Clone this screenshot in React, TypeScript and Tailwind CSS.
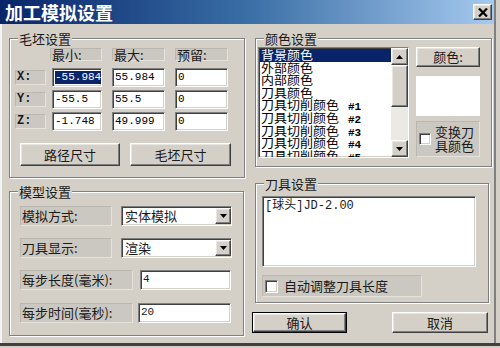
import React from "react";

const raised =
  "border border-t-white border-l-white border-r-[#404040] border-b-[#404040] shadow-[inset_-1px_-1px_0_#808080,inset_1px_1px_0_#e8e6e0]";
const sunken =
  "border border-t-[#808080] border-l-[#808080] border-r-white border-b-white shadow-[inset_1px_1px_0_#404040,inset_-1px_-1px_0_#d4d0c8]";
const etched = "border border-[#808080] shadow-[inset_1px_1px_0_#fff,1px_1px_0_#fff]";
const stat =
  "bg-[#cbc8c1] border border-t-[#bab7b0] border-l-[#bab7b0] border-r-[#e6e3dc] border-b-[#e6e3dc]";
const mono = "font-['Liberation_Mono','Noto_Sans_CJK_SC',monospace]";

function Group({ title, className, children }: { title: string; className: string; children: React.ReactNode }) {
  return (
    <div className={`relative ${etched} ${className}`}>
      <span className="absolute -top-[8px] left-[8px] bg-[#d4d0c8] px-[1px] text-[13px] leading-[15px] text-[#1a1a1a]">
        {title}
      </span>
      {children}
    </div>
  );
}

function Down() {
  return (
    <svg width="7" height="4" viewBox="0 0 7 4">
      <path d="M0 0h7L3.5 4z" fill="#000" />
    </svg>
  );
}

function Up() {
  return (
    <svg width="7" height="4" viewBox="0 0 7 4">
      <path d="M0 4h7L3.5 0z" fill="#000" />
    </svg>
  );
}

function Field({ value, w, selected }: { value: string; w: string; selected?: boolean }) {
  return (
    <div className={`${sunken} ${w} h-[19px] bg-white flex items-center pl-[2px] text-[11px] ${mono} text-black`}>
      {selected ? <span className="bg-[#0a246a] text-white leading-[13px]">{value}</span> : value}
    </div>
  );
}

function Select({ value }: { value: string }) {
  return (
    <div className={`${sunken} w-[111px] h-[20px] bg-white flex items-center justify-between`}>
      <span className="pl-[3px] text-[13px] leading-[16px]">{value}</span>
      <div className={`${raised} w-[16px] h-[16px] bg-[#d4d0c8] flex items-center justify-center`}>
        <Down />
      </div>
    </div>
  );
}

const colours = [
  ["背景颜色", ""],
  ["外部颜色", ""],
  ["内部颜色", ""],
  ["刀具颜色", ""],
  ["刀具切削颜色", "#1"],
  ["刀具切削颜色", "#2"],
  ["刀具切削颜色", "#3"],
  ["刀具切削颜色", "#4"],
  ["刀具切削颜色", "#5"],
];

export default function App() {
  return (
    <div className="w-[500px] h-[348px] bg-[#d4d0c8] overflow-hidden font-['Noto_Sans_CJK_SC',sans-serif] text-[#1a1a1a] shadow-[inset_0_-2px_0_#d4d0c8,inset_0_-5px_0_#404040,inset_2px_0_0_#f4f4f4,inset_-4px_0_0_#d4d0c8,inset_-6px_0_0_#808080]">
      {/* title bar */}
      <div className="w-[494px] h-[24px] flex items-center justify-between bg-gradient-to-r from-[#0a246a] via-[#3a6ea5] to-[#a6caf0] pl-[5px] pr-[2px]">
        <span className="text-white font-bold text-[18px] leading-[22px]">加工模拟设置</span>
        <div className={`${raised} bg-[#d4d0c8] w-[19px] h-[16px] flex items-center justify-center`}>
          <svg width="10" height="9" viewBox="0 0 10 9">
            <path d="M1 0.5L9 8.5M9 0.5L1 8.5" stroke="#000" strokeWidth="2.2" />
          </svg>
        </div>
      </div>

      <div className="flex pt-[14px] pl-[9px] gap-[10px]">
        {/* left column */}
        <div className="w-[236px] flex flex-col">
          <Group title="毛坯设置" className="h-[140px]">
            <div className="pt-[9px] pl-[40px] flex gap-[10px]">
              <div className={`${stat} w-[52px] h-[13px] text-[13px] leading-[11px] pl-[1px]`}>最小:</div>
              <div className={`${stat} w-[53px] h-[13px] text-[13px] leading-[11px] pl-[1px]`}>最大:</div>
              <div className={`${stat} w-[53px] h-[13px] text-[13px] leading-[11px] pl-[1px]`}>预留:</div>
            </div>
            <div className="mt-[7px] pl-[5px] flex flex-col gap-[3px]">
              {[
                ["X:", "-55.984", "55.984"],
                ["Y:", "-55.5", "55.5"],
                ["Z:", "-1.748", "49.999"],
              ].map(([l, a, b], i) => (
                <div key={l} className="flex items-center">
                  <div className={`${stat} w-[31px] h-[15px] text-[12px] leading-[13px] pl-[1px] ${mono} font-bold`}>
                    {l}
                  </div>
                  <div className="ml-[6px]">
                    <Field value={a} w="w-[50px]" selected={i === 0} />
                  </div>
                  <div className="ml-[10px]">
                    <Field value={b} w="w-[53px]" />
                  </div>
                  <div className="ml-[10px]">
                    <Field value="0" w="w-[53px]" />
                  </div>
                </div>
              ))}
            </div>
            <div className="mt-[12px] pl-[10px] flex gap-[10px]">
              <div className={`${raised} w-[100px] h-[23px] flex items-center justify-center text-[13px]`}>路径尺寸</div>
              <div className={`${raised} w-[101px] h-[23px] flex items-center justify-center text-[13px]`}>毛坯尺寸</div>
            </div>
          </Group>

          <Group title="模型设置" className="mt-[13px] h-[145px] w-[235px]">
            <div className="pt-[14px] pl-[10px] flex flex-col">
              <div className="flex">
                <div className={`${stat} w-[92px] h-[20px] text-[13px] leading-[18px] pl-[1px]`}>模拟方式:</div>
                <div className="ml-[9px]">
                  <Select value="实体模拟" />
                </div>
              </div>
              <div className="flex mt-[12px]">
                <div className={`${stat} w-[92px] h-[20px] text-[13px] leading-[18px] pl-[1px]`}>刀具显示:</div>
                <div className="ml-[9px]">
                  <Select value="渲染" />
                </div>
              </div>
              <div className="flex mt-[12px]">
                <div className={`${stat} w-[113px] h-[20px] text-[13px] leading-[18px] pl-[1px]`}>每步长度(毫米):</div>
                <div className="ml-[7px]">
                  <div className={`${sunken} w-[91px] h-[20px] bg-white pl-[2px] text-[11px] leading-[17px] ${mono}`}>4</div>
                </div>
              </div>
              <div className="flex mt-[13px]">
                <div className={`${stat} w-[113px] h-[20px] text-[13px] leading-[18px] pl-[1px]`}>每步时间(毫秒):</div>
                <div className="ml-[5px]">
                  <div className={`${sunken} w-[93px] h-[20px] bg-white pl-[2px] text-[11px] leading-[17px] ${mono}`}>20</div>
                </div>
              </div>
            </div>
          </Group>
        </div>

        {/* right column */}
        <div className="w-[237px] flex flex-col">
          <Group title="颜色设置" className="h-[129px]">
            <div className="pt-[8px] pl-[2px] flex">
              <div className={`${sunken} w-[151px] h-[111px] bg-white flex overflow-hidden`}>
                <div className="flex-1 pt-[1px] pl-[1px] overflow-hidden">
                  {colours.map(([n, k], i) => (
                    <div
                      key={i}
                      className={`h-[12.6px] pl-[1px] whitespace-nowrap ${
                        i === 0 ? "bg-[#0a246a] text-white" : "text-black"
                      }`}
                    >
                      <span className="block text-[13px] leading-[12.6px] origin-center scale-y-[0.92]">
                        {n}
                        {k && <span className={`ml-[9px] text-[11px] ${mono} font-bold`}>{k}</span>}
                      </span>
                    </div>
                  ))}
                </div>
                <div className="w-[17px] flex flex-col bg-[#ebe9e4]">
                  <div className={`${raised} h-[17px] bg-[#d4d0c8] flex items-center justify-center`}>
                    <Up />
                  </div>
                  <div className={`${raised} h-[42px] bg-[#d4d0c8]`} />
                  <div className="flex-1" />
                  <div className={`${raised} h-[17px] bg-[#d4d0c8] flex items-center justify-center`}>
                    <Down />
                  </div>
                </div>
              </div>
              <div className="ml-[7px] w-[64px] flex flex-col">
                <div className={`${raised} h-[20px] flex items-center justify-center text-[13px]`}>颜色:</div>
                <div className="mt-[9px] h-[40px] bg-white" />
                <div className={`${stat} mt-[5px] h-[36px] flex items-center pl-[2px]`}>
                  <div className={`${sunken} w-[12px] h-[12px] bg-white shrink-0`} />
                  <div className="ml-[4px] text-[13px] leading-[14px]">
                    变换刀
                    <br />
                    具颜色
                  </div>
                </div>
              </div>
            </div>
          </Group>

          <Group title="刀具设置" className="mt-[16px] w-[234px] h-[120px]">
            <div className="pt-[12px] pl-[6px] flex flex-col">
              <div className={`${sunken} w-[214px] h-[71px] bg-white pl-[2px] pt-[2px] text-[12px] leading-[14px] ${mono}`}>
                [球头]JD-2.00
              </div>
              <div className={`${stat} mt-[8px] w-[160px] h-[22px] flex items-center pl-[2px]`}>
                <div className={`${sunken} w-[13px] h-[13px] bg-white shrink-0`} />
                <span className="ml-[6px] text-[13px] leading-[16px]">自动调整刀具长度</span>
              </div>
            </div>
          </Group>

          <div className="mt-[9px] -ml-[3px] flex">
            <div className="w-[95px] h-[21px] border border-black">
              <div className={`${raised} h-full flex items-center justify-center text-[13px]`}>确认</div>
            </div>
            <div className={`${raised} ml-[45px] w-[96px] h-[21px] flex items-center justify-center text-[13px]`}>取消</div>
          </div>
        </div>
      </div>
    </div>
  );
}
